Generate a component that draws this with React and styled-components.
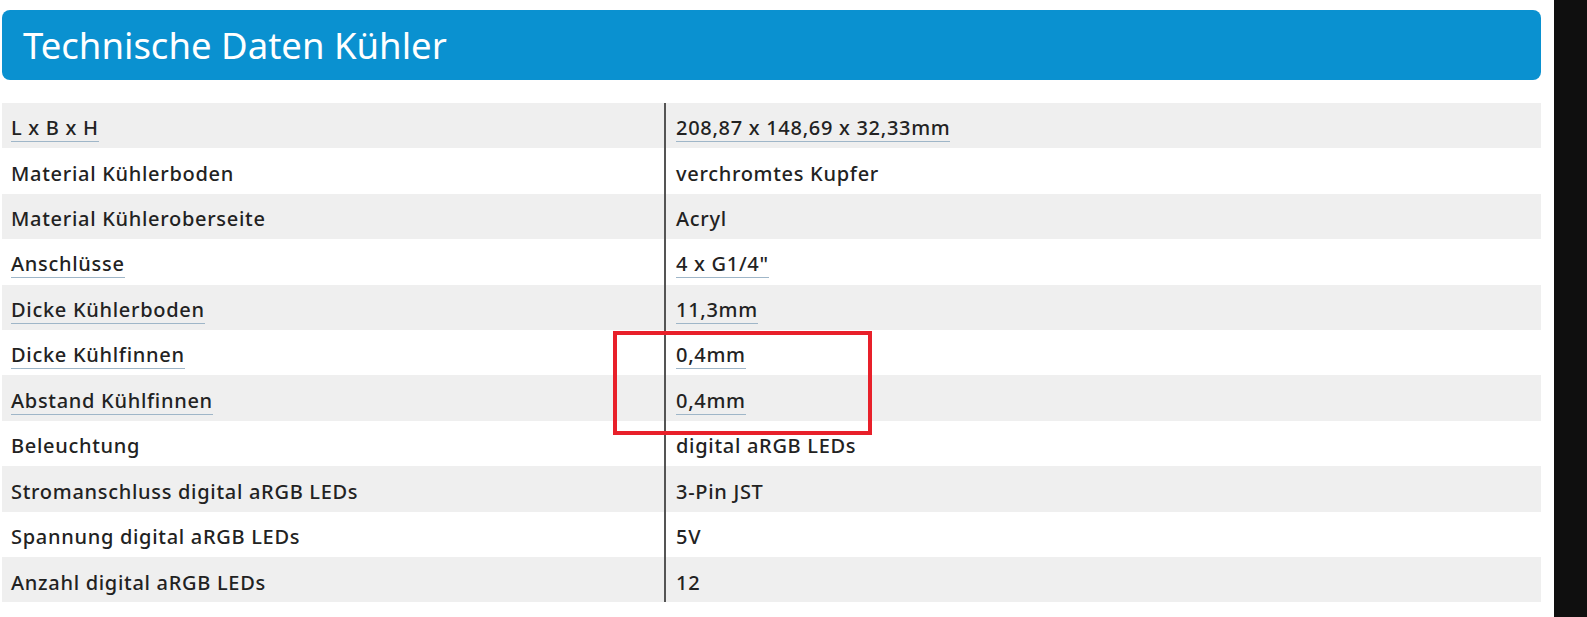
import styled, { createGlobalStyle } from 'styled-components';

const GlobalStyle = createGlobalStyle`
  html, body {
    margin: 0;
    padding: 0;
    background: #fff;
  }
`;

const Page = styled.div`
  display: flex;
  width: 1587px;
  height: 617px;
  overflow: hidden;
`;

const Main = styled.div`
  width: 1554px;
  padding: 10px 13px 0 2px;
  box-sizing: border-box;
  position: relative;
`;

const Edge = styled.div`
  flex: 1;
  background: #0f0f0f;
`;

const Title = styled.h2`
  margin: 0;
  height: 70px;
  display: flex;
  align-items: center;
  padding-left: 21px;
  background: #0a91d0;
  border-radius: 8px;
  color: #fff;
  font-family: 'Noto Sans', sans-serif;
  font-weight: 400;
  font-size: 36.5px;
`;

const Table = styled.div`
  margin-top: 23px;
`;

const Row = styled.div`
  display: grid;
  grid-template-columns: 662px 1fr;
  height: 45.4px;
  background: ${p => (p.$odd ? '#efefef' : '#fff')};
  font-family: 'Noto Sans', sans-serif;
  font-weight: 500;
  font-size: 20px;
  letter-spacing: 0.7px;
  color: #222;
`;

const Cell = styled.div`
  display: flex;
  align-items: center;
  padding-top: 5px;
  box-sizing: border-box;
  padding-left: ${p => (p.$value ? '10px' : '9px')};
  border-left: ${p => (p.$value ? '2px solid #555' : 'none')};
`;

const Link = styled.span`
  border-bottom: 1px solid #9fb6c8;
`;

const Highlight = styled.div`
  position: absolute;
  left: 613px;
  top: 331px;
  width: 259px;
  height: 104px;
  box-sizing: border-box;
  border: 4px solid #e8202a;
`;

const rows = [
  ['L x B x H', '208,87 x 148,69 x 32,33mm', true],
  ['Material Kühlerboden', 'verchromtes Kupfer', false],
  ['Material Kühleroberseite', 'Acryl', false],
  ['Anschlüsse', '4 x G1/4"', true],
  ['Dicke Kühlerboden', '11,3mm', true],
  ['Dicke Kühlfinnen', '0,4mm', true],
  ['Abstand Kühlfinnen', '0,4mm', true],
  ['Beleuchtung', 'digital aRGB LEDs', false],
  ['Stromanschluss digital aRGB LEDs', '3-Pin JST', false],
  ['Spannung digital aRGB LEDs', '5V', false],
  ['Anzahl digital aRGB LEDs', '12', false],
];

const App = () => (
  <>
    <GlobalStyle />
    <Page>
      <Main>
        <Title>Technische Daten Kühler</Title>
        <Table>
          {rows.map(([label, value, link], i) => (
            <Row key={label} $odd={i % 2 === 0}>
              <Cell>{link ? <Link>{label}</Link> : label}</Cell>
              <Cell $value>{link ? <Link>{value}</Link> : value}</Cell>
            </Row>
          ))}
        </Table>
        <Highlight />
      </Main>
      <Edge />
    </Page>
  </>
);

export default App;
